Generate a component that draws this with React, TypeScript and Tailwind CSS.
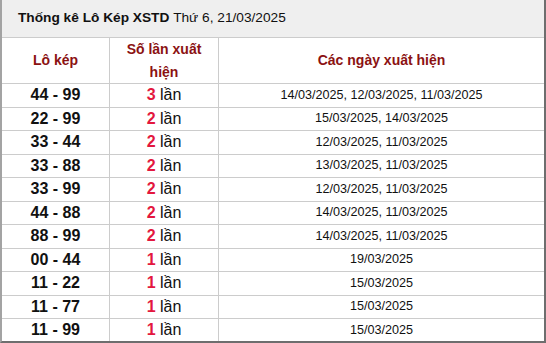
const rows: [string, number, string][] = [
  ["44 - 99", 3, "14/03/2025, 12/03/2025, 11/03/2025"],
  ["22 - 99", 2, "15/03/2025, 14/03/2025"],
  ["33 - 44", 2, "12/03/2025, 11/03/2025"],
  ["33 - 88", 2, "13/03/2025, 11/03/2025"],
  ["33 - 99", 2, "12/03/2025, 11/03/2025"],
  ["44 - 88", 2, "14/03/2025, 11/03/2025"],
  ["88 - 99", 2, "14/03/2025, 11/03/2025"],
  ["00 - 44", 1, "19/03/2025"],
  ["11 - 22", 1, "15/03/2025"],
  ["11 - 77", 1, "15/03/2025"],
  ["11 - 99", 1, "15/03/2025"],
];

export default function App() {
  return (
    <div
      className="w-[546px] h-[343px] bg-white border-l-2 border-r-2 border-b-2 border-l-[#a3a3a3] border-r-[#6e6e6e] border-b-[#6e6e6e] flex flex-col overflow-hidden"
      style={{ fontFamily: '"Liberation Sans", Arial, sans-serif' }}
    >
      {/* Title */}
      <div className="h-[37px] shrink-0 bg-[#efefef] flex items-center pl-[16px] text-[13.7px] text-[#111]">
        <span className="font-bold">Thống kê Lô Kép XSTD</span>
        <span>&nbsp;Thứ 6, 21/03/2025</span>
      </div>

      {/* Column headers */}
      <div className="h-[46px] shrink-0 flex border-t border-[#cccccc] text-[14px] font-bold text-[#8b1212]">
        <div className="w-[108px] border-r border-[#cccccc] flex items-center justify-center">
          Lô kép
        </div>
        <div className="w-[109px] border-r border-[#cccccc] flex items-center justify-center text-center leading-[23px] px-2">
          Số lần xuất hiện
        </div>
        <div className="flex-1 flex items-center justify-center">Các ngày xuất hiện</div>
      </div>

      {/* Rows */}
      {rows.map(([pair, count, dates]) => (
        <div key={pair} className="h-[23.5px] shrink-0 flex border-t border-[#cccccc]">
          <div className="w-[108px] border-r border-[#cccccc] flex items-center justify-center text-[16px] font-bold text-[#111]">
            {pair}
          </div>
          <div className="w-[109px] border-r border-[#cccccc] flex items-center justify-center text-[16px] text-[#111]">
            <span className="font-bold text-[#e3173e]">{count}</span>
            <span>&nbsp;lần</span>
          </div>
          <div className="flex-1 flex items-center justify-center text-[12.6px] text-[#111]">
            {dates}
          </div>
        </div>
      ))}
    </div>
  );
}
